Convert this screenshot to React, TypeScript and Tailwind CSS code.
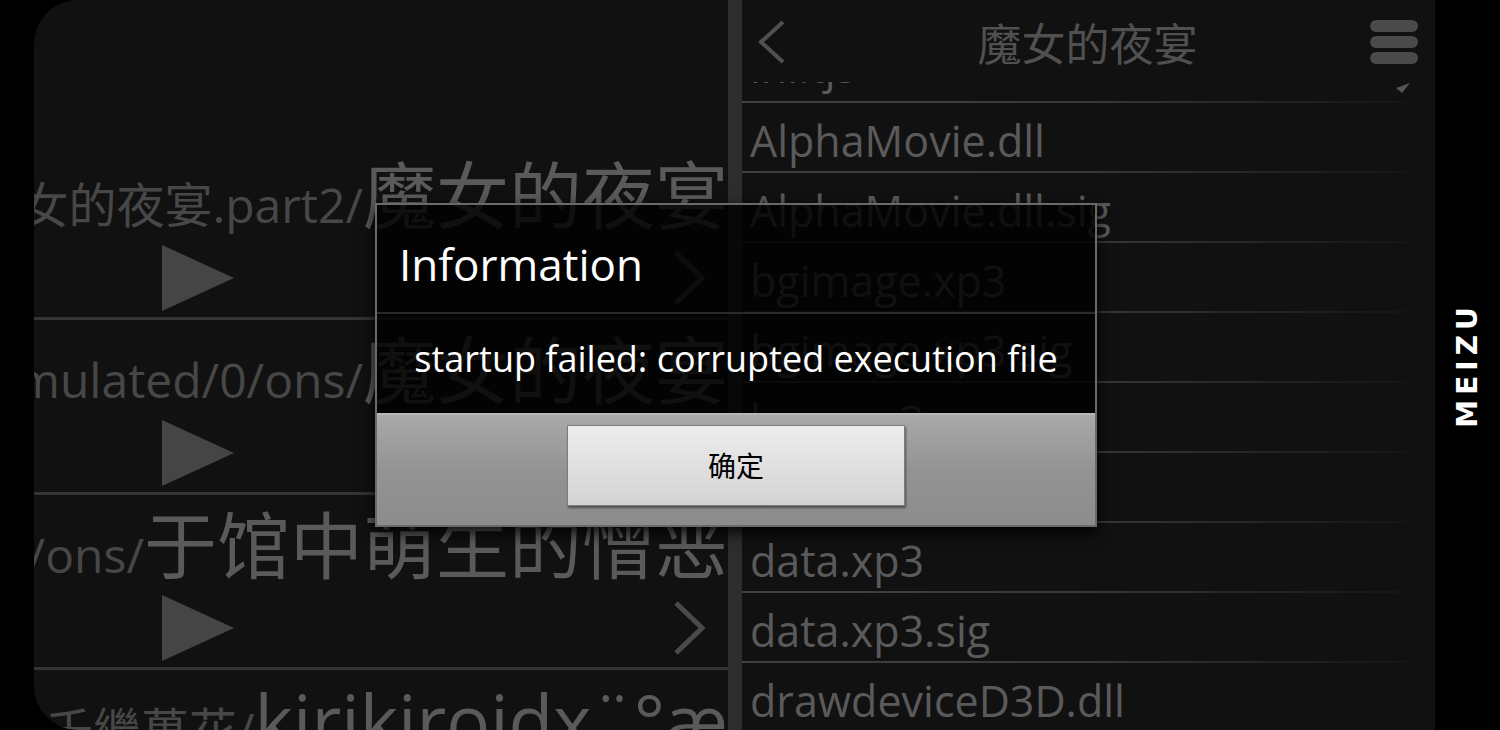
import React from "react";

type FolderRow = {
  path: string;
  name: string;
};

const folders: FolderRow[] = [
  { path: "/storage/emulated/0/ons/魔女的夜宴.part2/", name: "魔女的夜宴" },
  { path: "/storage/emulated/0/ons/", name: "魔女的夜宴" },
  { path: "/storage/emulated/0/ons/", name: "于馆中萌生的憎恶" },
  { path: "/storage/emulated/0/ons/千繼萬花/", name: "kirikiroidx¨°æ" },
];

const files = [
  "AlphaMovie.dll",
  "AlphaMovie.dll.sig",
  "bgimage.xp3",
  "bgimage.xp3.sig",
  "bgm.xp3",
  "bgm.xp3.sig",
  "data.xp3",
  "data.xp3.sig",
  "drawdeviceD3D.dll",
];

const font = "font-['Open_Sans','Noto_Sans_CJK_SC',sans-serif]";

const FolderItem: React.FC<FolderRow> = ({ path, name }) => {
  return (
    <div className="h-[175px] shrink-0 border-b-[3px] border-[#343434] pt-[13px]">
      <div className="flex h-[86px] items-baseline justify-end overflow-hidden whitespace-nowrap leading-none">
        <span className="text-[48px] text-[#474747]">{path}</span>
        <span className="text-[73px] text-[#5a5a5a]">{name}</span>
      </div>
      <div className="mt-[1px] flex h-[66px] items-center justify-between pl-[128px] pr-[21px]">
        <svg width="72" height="66" viewBox="0 0 72 66">
          <polygon points="0,0 72,33 0,66" fill="#454545" />
        </svg>
        <svg width="36" height="58" viewBox="0 0 36 58">
          <polyline points="5,4 31,29 5,54" fill="none" stroke="#4a4a4a" strokeWidth="5" />
        </svg>
      </div>
    </div>
  );
};

const FileItem: React.FC<{ name: string; first?: boolean }> = ({ name, first }) => {
  return (
    <div className={`relative h-[70px] shrink-0 ${first ? "-mt-[49px]" : ""}`}>
      <div
        className={`pl-[8px] text-[43px] leading-[68px] text-[#5a5a5a] whitespace-nowrap ${first ? "pt-[0px]" : "pt-[4px]"}`}
      >
        {name}
      </div>
      {first && (
        <svg className="absolute right-[25px] top-[50px]" width="14" height="10" viewBox="0 0 14 10">
          <polygon points="0,5 14,0 6,10" fill="#555" />
        </svg>
      )}
      <div className="absolute bottom-0 left-0 h-[2px] w-[665px] bg-linear-to-r from-[#404040] via-[#3a3a3a] to-[#151515]" />
    </div>
  );
};

export default function App() {
  return (
    <div className={`relative flex h-[730px] w-[1500px] overflow-hidden bg-black ${font}`}>
      <div className="w-[34px] shrink-0" />

      {/* left: folder list */}
      <div className="flex w-[694px] shrink-0 flex-col overflow-hidden rounded-l-[44px] bg-[#111]">
        <div className="h-[145px] shrink-0" />
        {folders.map((f, i) => (
          <FolderItem key={i} {...f} />
        ))}
      </div>

      <div className="w-[14px] shrink-0 bg-[#2d2d2d]" />

      {/* right: file list */}
      <div className="flex w-[693px] shrink-0 flex-col bg-[#111]">
        <div className="relative z-10 flex h-[82px] shrink-0 items-start justify-between bg-[#111] pl-[15px] pr-[17px] pt-[20px]">
          <div className="w-[48px]">
            <svg width="30" height="44" viewBox="0 0 30 44">
              <polyline points="26,2 4,22 26,42" fill="none" stroke="#505050" strokeWidth="4" />
            </svg>
          </div>
          <div className="text-[44px] leading-[48px] text-[#505050]">魔女的夜宴</div>
          <div className="flex w-[48px] flex-col gap-[4px]">
            <div className="h-[12px] rounded-full bg-[#4a4a4a]" />
            <div className="h-[12px] rounded-full bg-[#4a4a4a]" />
            <div className="h-[12px] rounded-full bg-[#4a4a4a]" />
          </div>
        </div>
        <div className="flex flex-1 flex-col overflow-hidden">
          <FileItem name="ini.tjs" first />
          {files.map((f) => (
            <FileItem key={f} name={f} />
          ))}
        </div>
      </div>

      {/* brand strip */}
      <div className="flex w-[65px] shrink-0 items-center justify-center overflow-visible">
        <span className="shrink-0 -rotate-90 font-['DejaVu_Sans',sans-serif] text-[28px] font-semibold tracking-[5px] text-white">
          MEIZU
        </span>
      </div>

      {/* dialog */}
      <div className="absolute left-[375px] top-[203px] flex h-[324px] w-[722px] flex-col border-2 border-[#6a6a6a] shadow-[0_6px_14px_rgba(0,0,0,0.85)]">
        <div className="flex h-[107px] shrink-0 items-center bg-black/[0.82] pl-[22px] pt-[10px] text-[44px] text-white">
          Information
        </div>
        <div className="h-[2px] shrink-0 bg-[#2a2a2a]" />
        <div className="flex h-[99px] shrink-0 items-center justify-center bg-black/[0.82] pb-[10px] text-[36px] text-white">
          startup failed: corrupted execution file
        </div>
        <div className="flex flex-1 justify-center border-t-2 border-[#b8b8b8] bg-linear-to-b from-[#a9a9a9] via-[#939393] to-[#8c8c8c] pt-[10px]">
          <button className="flex h-[81px] w-[338px] items-center justify-center border border-[#7d7d7d] bg-linear-to-b from-[#ededed] to-[#d3d3d3] text-[28px] text-black shadow-[1px_2px_2px_rgba(0,0,0,0.45)]">
            确定
          </button>
        </div>
      </div>
    </div>
  );
}
